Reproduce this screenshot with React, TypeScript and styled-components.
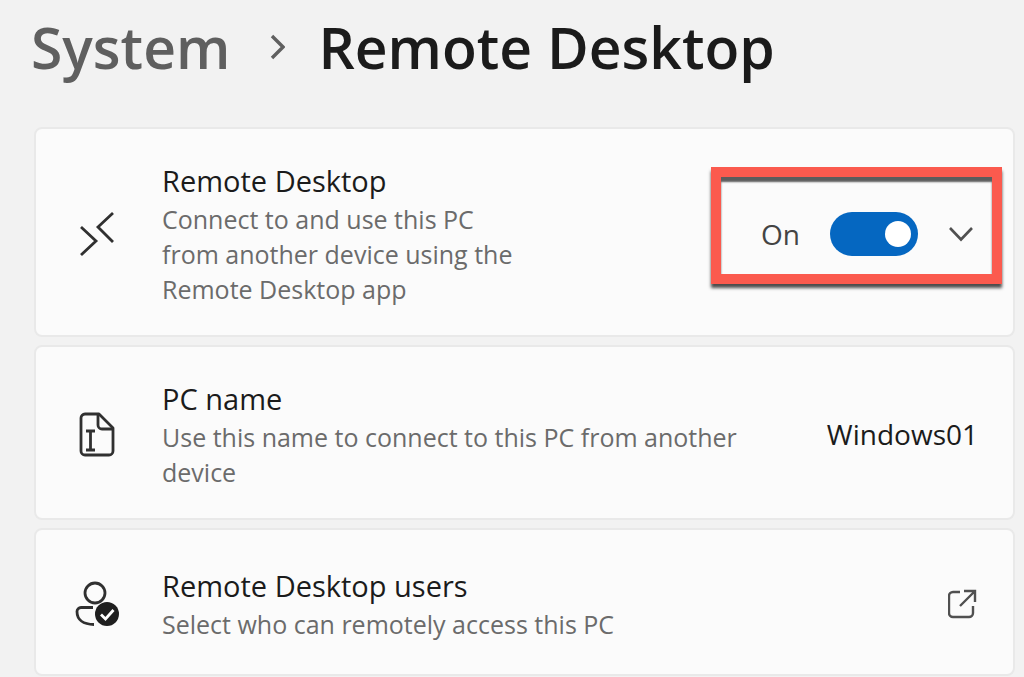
import React from "react";
import styled, { createGlobalStyle, css } from "styled-components";

const GlobalStyle = createGlobalStyle`
  *, *::before, *::after { box-sizing: border-box; }
  body {
    margin: 0;
    background: #f2f2f2;
    color: #1b1b1b;
    font-family: "Open Sans", "Noto Sans", sans-serif;
  }
`;

const Page = styled.main`
  padding: 9px 9px 0 34px;
`;

const Breadcrumb = styled.nav`
  display: flex;
  align-items: center;
  height: 76px;
  margin: 0 0 42px -3px;
  font-size: 57px;
  line-height: 76px;
  font-weight: 600;
  white-space: nowrap;
`;

const Crumb = styled.a`
  color: #5f5f5f;
  text-decoration: none;
`;

const Current = styled.h1`
  margin: 0;
  font: inherit;
`;

const Separator = styled.svg`
  width: 16px;
  height: 26px;
  margin: 0 33px 0 39px;
  flex: none;
`;

const Settings = styled.div`
  display: flex;
  flex-direction: column;
  gap: 8px;
`;

const Card = styled.section`
  display: flex;
  align-items: center;
  min-height: 148px;
  padding: 31px 35px 28px 36px;
  background: #fbfbfb;
  border: 2px solid #e9e9e9;
  border-radius: 8px;
`;

const CardIcon = styled.svg`
  flex: none;
  width: 52px;
  height: 52px;
  margin-right: 38px;
  color: #303030;
`;

const CardText = styled.div<{ $narrow?: boolean }>`
  flex: 1 1 auto;
  min-width: 0;
  ${(p) => p.$narrow && css`flex: 0 1 370px;`}
`;

const Title = styled.h2`
  margin: 0;
  font-size: 29px;
  line-height: 42px;
  font-weight: 400;
`;

const Description = styled.p`
  margin: 0;
  font-size: 25px;
  line-height: 35px;
  color: #6b6b6b;
`;

const Value = styled.span`
  flex: none;
  margin-left: 24px;
  font-size: 28px;
  line-height: 40px;
`;

const Controls = styled.div`
  position: relative;
  flex: none;
  display: flex;
  align-items: center;
  margin-left: auto;
`;

const Highlight = styled.div`
  position: absolute;
  inset: -45px -24px -28px -50px;
  border: 10px solid #fb5a4e;
  box-shadow: 0 4px 3px #4d4d4d, inset 0 5px 2px #5c5c5c;
  pointer-events: none;
`;

const SwitchLabel = styled.label`
  display: flex;
  align-items: center;
  gap: 30px;
  font-size: 28px;
  line-height: 40px;
  color: #444444;
`;

const Switch = styled.input`
  appearance: none;
  display: flex;
  align-items: center;
  justify-content: flex-start;
  width: 88px;
  height: 44px;
  margin: 0;
  padding: 0 7px;
  border-radius: 22px;
  background: #8a8a8a;

  &::before {
    content: "";
    width: 26px;
    height: 26px;
    border-radius: 50%;
    background: #ffffff;
  }

  &:checked {
    justify-content: flex-end;
    background: #0567c1;
  }
`;

const IconButton = styled.button<{ $space?: number }>`
  display: flex;
  flex: none;
  margin: 0 0 0 ${(p) => p.$space ?? 0}px;
  padding: 0;
  border: 0;
  background: none;
  color: #505050;
`;

export default function App() {
  return (
    <>
      <GlobalStyle />
      <Page>
        <Breadcrumb aria-label="Breadcrumb">
          <Crumb href="#system">System</Crumb>
          <Separator viewBox="0 0 16 26" aria-hidden="true">
            <path d="M3 2l11 11L3 24" fill="none" stroke="#606060" strokeWidth="3.4" />
          </Separator>
          <Current>Remote Desktop</Current>
        </Breadcrumb>

        <Settings>
          <Card>
            <CardIcon viewBox="0 0 52 52" fill="none" stroke="currentColor" strokeWidth="2.8" aria-hidden="true">
              <path d="M9 19l15 14L9 47M41 5L26 19l15 15" />
            </CardIcon>
            <CardText $narrow>
              <Title>Remote Desktop</Title>
              <Description>
                Connect to and use this PC from another device using the Remote Desktop app
              </Description>
            </CardText>
            <Controls>
              <SwitchLabel>
                On
                <Switch type="checkbox" role="switch" defaultChecked />
              </SwitchLabel>
              <IconButton type="button" aria-label="Show more settings" $space={30}>
                <svg width="30" height="16" viewBox="0 0 30 16" fill="none" stroke="currentColor" strokeWidth="2.6">
                  <path d="M2 2l11 11.500L24 2" />
                </svg>
              </IconButton>
              <Highlight />
            </Controls>
          </Card>

          <Card>
            <CardIcon
              viewBox="0 0 52 52"
              fill="none"
              stroke="currentColor"
              strokeWidth="2.8"
              strokeLinejoin="round"
              aria-hidden="true"
            >
              <path d="M13 6h14l14 14v23a4 4 0 0 1-4 4H13a4 4 0 0 1-4-4V10a4 4 0 0 1 4-4z" />
              <path d="M26 6v11a4 4 0 0 0 4 4h11" />
              <path d="M14 23h9M14 42h9M18.500 23v19" />
            </CardIcon>
            <CardText>
              <Title>PC name</Title>
              <Description>Use this name to connect to this PC from another device</Description>
            </CardText>
            <Value>Windows01</Value>
          </Card>

          <Card>
            <CardIcon viewBox="0 0 52 52" fill="none" stroke="currentColor" strokeWidth="2.8" aria-hidden="true">
              <circle cx="23" cy="15" r="10" />
              <path d="M21 29.500H9a4 4 0 0 0-4 4c0 8 6 13 17 13" />
              <circle cx="35" cy="36" r="12" fill="#1f1f1f" stroke="none" />
              <path d="M29 36.500l4.500 4.500 8-9" stroke="#ffffff" />
            </CardIcon>
            <CardText>
              <Title>Remote Desktop users</Title>
              <Description>Select who can remotely access this PC</Description>
            </CardText>
            <IconButton type="button" aria-label="Select users">
              <svg width="30" height="30" viewBox="0 0 30 30" fill="none" stroke="currentColor" strokeWidth="2.4">
                <path d="M12 3H5a4 4 0 0 0-4 4v17a4 4 0 0 0 4 4h16a4 4 0 0 0 4-4v-7" />
                <path d="M16 2h11v11M27 2L12 17" />
              </svg>
            </IconButton>
          </Card>
        </Settings>
      </Page>
    </>
  );
}
